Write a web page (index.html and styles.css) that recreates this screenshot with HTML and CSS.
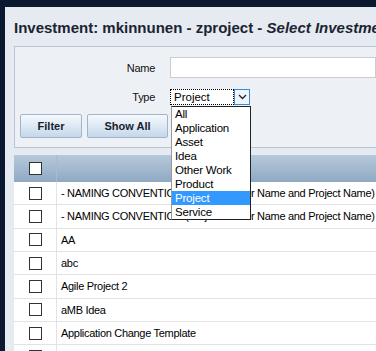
FILE: index.html
```html
<!DOCTYPE html>
<html lang="en">
<head>
  <meta charset="UTF-8" />
  <title>Investment: mkinnunen - zproject - Select Investment</title>
  <link rel="stylesheet" href="styles.css">
</head>
<body>

  <div class="panel">
    <h1 class="page-title">Investment: mkinnunen - zproject - <em>Select Investment</em></h1>

    <div class="filter-box">
      <div class="field">
        <label class="field-label" for="name">Name</label>
        <input type="text" id="name" class="text-input" />
      </div>

      <div class="field field-type">
        <span class="field-label">Type</span>
        <div class="select">
          <span class="select-value">Project</span>
          <span class="select-arrow">
            <svg width="9" height="6" viewBox="0 0 9 6"><path d="M1 1 L4.5 4.5 L8 1" fill="none" stroke="#222" stroke-width="1.3"/></svg>
          </span>
          <ul class="select-list">
            <li>All</li>
            <li>Application</li>
            <li>Asset</li>
            <li>Idea</li>
            <li>Other Work</li>
            <li>Product</li>
            <li class="selected">Project</li>
            <li>Service</li>
          </ul>
        </div>
      </div>

      <div class="buttons">
        <button class="btn btn-filter">Filter</button>
        <button class="btn btn-all">Show All</button>
      </div>
    </div>

    <div class="grid">
      <div class="grid-head">
        <div class="cell-check"><span class="checkbox"></span></div>
        <div class="cell-name"></div>
      </div>
      <div class="grid-row">
        <div class="cell-check"><span class="checkbox"></span></div>
        <div class="cell-name">- NAMING CONVENTION (Project Owner Name and Project Name)</div>
      </div>
      <div class="grid-row">
        <div class="cell-check"><span class="checkbox"></span></div>
        <div class="cell-name">- NAMING CONVENTION (Project Owner Name and Project Name)</div>
      </div>
      <div class="grid-row">
        <div class="cell-check"><span class="checkbox"></span></div>
        <div class="cell-name">AA</div>
      </div>
      <div class="grid-row">
        <div class="cell-check"><span class="checkbox"></span></div>
        <div class="cell-name">abc</div>
      </div>
      <div class="grid-row">
        <div class="cell-check"><span class="checkbox"></span></div>
        <div class="cell-name">Agile Project 2</div>
      </div>
      <div class="grid-row">
        <div class="cell-check"><span class="checkbox"></span></div>
        <div class="cell-name">aMB Idea</div>
      </div>
      <div class="grid-row">
        <div class="cell-check"><span class="checkbox"></span></div>
        <div class="cell-name">Application Change Template</div>
      </div>
      <div class="grid-row">
        <div class="cell-check"><span class="checkbox"></span></div>
        <div class="cell-name"></div>
      </div>
    </div>
  </div>

</body>
</html>
```

FILE: styles.css
```css
html, body {
  margin: 0;
  padding: 0;
  height: 351px;
  overflow: hidden;
}

body {
  background: #0b1930;
  font-family: "Liberation Sans", Arial, sans-serif;
  color: #000;
  padding: 7px 0 0 5px;
}

.panel {
  background: #e6eaf1;
  height: 344px;
  padding: 12px 0 0 9px;
  overflow: hidden;
  box-sizing: border-box;
}

.page-title {
  margin: 0 0 9px;
  font-size: 15px;
  line-height: 18px;
  font-weight: bold;
  color: #1b2431;
  white-space: nowrap;
}

.page-title em {
  font-style: italic;
}

.filter-box {
  position: relative;
  height: 102px;
  box-sizing: border-box;
  border: 1px solid #b9c4d3;
  border-right: none;
  background: #edf0f5;
  padding-top: 10px;
}

.field {
  display: flex;
  align-items: center;
}

.field-label {
  width: 140px;
  margin-right: 15px;
  text-align: right;
  font-size: 11px;
  letter-spacing: -0.3px;
  color: #111;
}

.text-input {
  flex: 1;
  height: 21px;
  box-sizing: border-box;
  margin: 0;
  border: 1px solid #c9ccd1;
  background: #fff;
}

.field-type {
  margin-top: 11px;
}

.select {
  position: relative;
  display: flex;
  width: 80px;
  height: 16px;
  box-sizing: border-box;
  background: #fff;
}

.select-value {
  flex: 1;
  border: 1px dotted #000;
  font-size: 11.5px;
  line-height: 14px;
  padding-left: 3px;
}

.select-arrow {
  width: 16px;
  box-sizing: border-box;
  border: 1px solid #3a8ad8;
  background: #eef5fc;
  display: flex;
  align-items: center;
  justify-content: center;
}

.select-list {
  position: absolute;
  left: 1px;
  top: 17px;
  width: 80px;
  margin: 0;
  padding: 0;
  list-style: none;
  background: #fff;
  border: 1px solid #222;
  border-left-color: #999;
  box-sizing: border-box;
  z-index: 2;
}

.select-list li {
  height: 14px;
  line-height: 14px;
  padding-left: 3px;
  font-size: 11.5px;
  letter-spacing: -0.2px;
}

.select-list li.selected {
  background: #3399ff;
  color: #fff;
}

.buttons {
  display: flex;
  gap: 5px;
  margin: 9px 0 0 5px;
}

.btn {
  height: 24px;
  margin: 0;
  padding: 0;
  border: 1px solid #a1b5ca;
  border-radius: 2px;
  background: linear-gradient(#f6f9fd, #dbe7f3 55%, #c4d7eb);
  font-family: "Liberation Sans", Arial, sans-serif;
  font-size: 11px;
  font-weight: bold;
  color: #18212c;
}

.btn-filter {
  width: 62px;
}

.btn-all {
  width: 81px;
}

.grid {
  margin-top: 7px;
  background: #fff;
}

.grid-head {
  display: flex;
  height: 27px;
  background: linear-gradient(#b6c9db, #8fa9c3);
}

.grid-head .cell-check {
  border-right: 1px solid #a9bbcd;
}

.grid-row {
  display: flex;
  height: 23.33px;
  box-sizing: border-box;
  border-bottom: 1px solid #e3e3e3;
}

.cell-check {
  width: 42px;
  flex: none;
  display: flex;
  align-items: center;
  justify-content: center;
  border-right: 1px solid #e3e3e3;
}

.cell-name {
  flex: 1;
  display: flex;
  align-items: center;
  padding-left: 4px;
  font-size: 11px;
  letter-spacing: -0.3px;
  white-space: nowrap;
  overflow: hidden;
}

.checkbox {
  width: 13px;
  height: 13px;
  box-sizing: border-box;
  border: 1px solid #333;
  background: #fff;
}
```
